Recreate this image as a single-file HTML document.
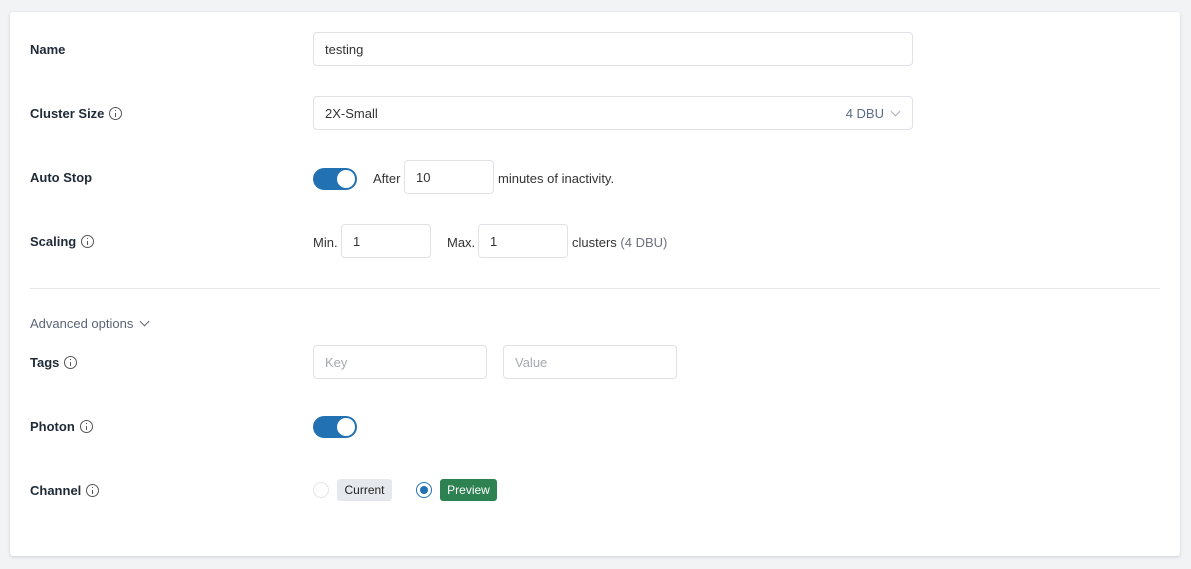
<!DOCTYPE html>
<html><head><style>
body{margin:0;background:#f2f3f5;font-family:"Liberation Sans",sans-serif;font-size:13px;color:#1f2a37;width:1191px;height:569px;overflow:hidden;position:relative}
.card{position:absolute;left:10px;top:12px;width:1170px;height:544px;background:#fff;border-radius:3px;box-shadow:0 1px 3px rgba(0,0,0,.15)}
.a{position:absolute}
.lbl{position:absolute;left:30px;font-weight:600;color:#1f2a37;line-height:16px}
.i{display:inline-block;width:13px;height:13px;border:1px solid #555;border-radius:50%;margin-left:5px;vertical-align:-2px;position:relative;box-sizing:border-box}
.i:after{content:"";position:absolute;left:5px;top:5px;width:1px;height:4px;background:#555}
.i:before{content:"";position:absolute;left:5px;top:2px;width:1px;height:1px;background:#555}
.inp{position:absolute;height:34px;border:1px solid #dfe1e5;border-radius:4px;box-sizing:border-box;padding-left:11px;line-height:34px;color:#333}
.ph{color:#a5a9b0}
.tg{position:absolute;width:44px;height:22px;border-radius:11px;background:#2271b3;left:313px}
.tg:after{content:"";position:absolute;right:2px;top:2px;width:18px;height:18px;border-radius:50%;background:#fff}
.t{position:absolute;line-height:16px;color:#333}
</style></head><body>
<div class="card"></div>
<div class="lbl" style="top:42px">Name</div>
<div class="inp" style="left:313px;top:32px;width:600px">testing</div>
<div class="lbl" style="top:106px">Cluster Size<span class="i"></span></div>
<div class="inp" style="left:313px;top:96px;width:600px">2X-Small<span style="position:absolute;right:28px;color:#5b6b85">4 DBU</span><span style="position:absolute;right:13px;top:11px;width:6px;height:6px;border-right:1px solid #aab;border-bottom:1px solid #aab;transform:rotate(45deg)"></span></div>
<div class="lbl" style="top:170px">Auto Stop</div>
<div class="tg" style="top:168px"></div>
<div class="t" style="left:373px;top:171px">After</div>
<div class="inp" style="left:404px;top:160px;width:90px">10</div>
<div class="t" style="left:498px;top:171px">minutes of inactivity.</div>
<div class="lbl" style="top:234px">Scaling<span class="i"></span></div>
<div class="t" style="left:313px;top:235px">Min.</div>
<div class="inp" style="left:341px;top:224px;width:90px">1</div>
<div class="t" style="left:447px;top:235px">Max.</div>
<div class="inp" style="left:478px;top:224px;width:90px">1</div>
<div class="t" style="left:572px;top:235px">clusters <span style="color:#6b7280">(4 DBU)</span></div>
<div class="a" style="left:30px;top:288px;width:1130px;height:1px;background:#e5e7eb"></div>
<div class="t" style="left:30px;top:316px;color:#5b6577">Advanced options <span style="display:inline-block;width:6px;height:6px;border-right:1px solid #667;border-bottom:1px solid #667;transform:rotate(45deg);margin-left:4px;vertical-align:3px"></span></div>
<div class="lbl" style="top:355px">Tags<span class="i"></span></div>
<div class="inp ph" style="left:313px;top:345px;width:174px">Key</div>
<div class="inp ph" style="left:503px;top:345px;width:174px">Value</div>
<div class="lbl" style="top:419px">Photon<span class="i"></span></div>
<div class="tg" style="top:416px"></div>
<div class="lbl" style="top:483px">Channel<span class="i"></span></div>
<div class="a" style="left:313px;top:482px;width:16px;height:16px;border:1px solid #e3e5e8;border-radius:50%;box-sizing:border-box"></div>
<div class="a" style="left:337px;top:479px;width:55px;height:22px;background:#e5e8ed;border-radius:3px;text-align:center;line-height:23px;font-size:12px;color:#222">Current</div>
<div class="a" style="left:416px;top:482px;width:16px;height:16px;border:1px solid #2271b3;border-radius:50%;box-sizing:border-box"><div style="position:absolute;left:3px;top:3px;width:8px;height:8px;border-radius:50%;background:#2271b3"></div></div>
<div class="a" style="left:440px;top:479px;width:57px;height:22px;background:#2e8150;border-radius:3px;text-align:center;line-height:23px;font-size:12px;color:#fff">Preview</div>
</body></html>
